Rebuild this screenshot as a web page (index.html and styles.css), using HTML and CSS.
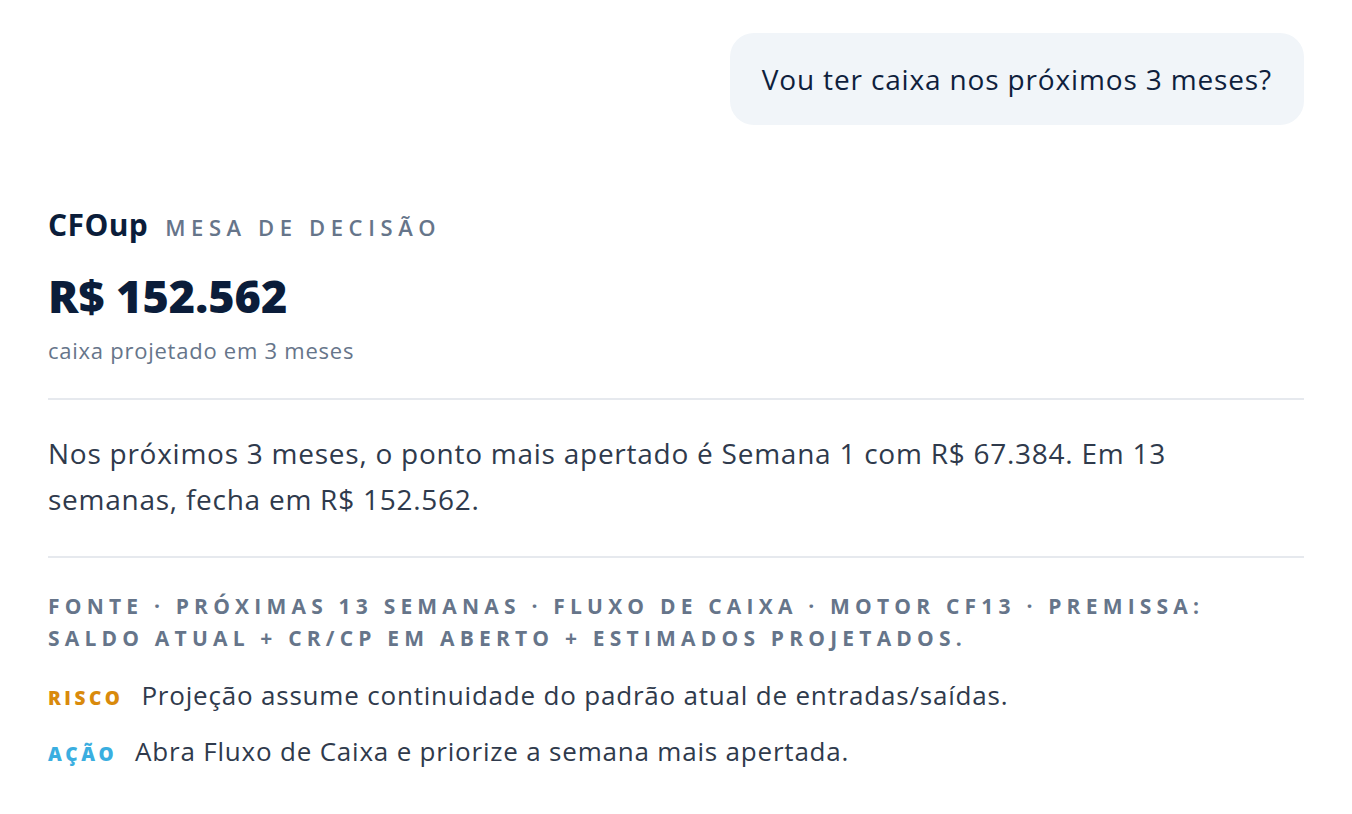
FILE: index.html
```html
<!DOCTYPE html>
<html lang="pt-BR">
<head>
<meta charset="utf-8">
<title>CFOup — Mesa de decisão</title>
<link rel="stylesheet" href="styles.css">
</head>
<body>
<main class="chat">
  <div class="msg-user">
    <div class="bubble">Vou ter caixa nos próximos 3 meses?</div>
  </div>

  <section class="answer">
    <header class="brand">
      <span class="brand-name">CFOup</span>
      <span class="brand-tag">Mesa de decisão</span>
    </header>

    <div class="kpi">
      <div class="kpi-value">R$ 152.562</div>
      <div class="kpi-label">caixa projetado em 3 meses</div>
    </div>

    <hr class="rule rule-top">

    <p class="summary">Nos próximos 3 meses, o ponto mais apertado é Semana 1 com R$ 67.384. Em 13 semanas, fecha em R$ 152.562.</p>

    <hr class="rule">

    <p class="source">Fonte · Próximas 13 semanas · Fluxo de caixa · Motor CF13 · Premissa: saldo atual + CR/CP em aberto + estimados projetados.</p>

    <ul class="notes">
      <li class="note"><span class="tag tag-risk">Risco</span><span>Projeção assume continuidade do padrão atual de entradas/saídas.</span></li>
      <li class="note"><span class="tag tag-action">Ação</span><span>Abra Fluxo de Caixa e priorize a semana mais apertada.</span></li>
    </ul>
  </section>
</main>
</body>
</html>
```

FILE: styles.css
```css
* { box-sizing: border-box; }

html, body {
  margin: 0;
  padding: 0;
  background: #ffffff;
}

body {
  font-family: "Open Sans", "Noto Sans", "Liberation Sans", sans-serif;
  color: #0f1f3d;
}

.chat {
  padding: 33px 48px 40px 48px;
}

/* user question, right aligned */
.msg-user {
  display: flex;
  justify-content: flex-end;
}

.bubble {
  background: #f1f5f9;
  border-radius: 24px;
  padding: 0 32px 0 32px;
  height: 92px;
  display: flex;
  align-items: center;
  font-size: 28px;
  letter-spacing: 0.85px;
  color: #0f1f3d;
}

/* assistant answer */
.answer {
  margin-top: 85px;
}

.brand {
  display: flex;
  align-items: baseline;
  gap: 17px;
  height: 30px;
  line-height: 30px;
}

.brand-name {
  font-size: 30px;
  font-weight: 700;
  letter-spacing: 0.4px;
  color: #0b1d3a;
}

.brand-tag {
  font-size: 22px;
  font-weight: 600;
  text-transform: uppercase;
  letter-spacing: 5.6px;
  color: #66758a;
}

.kpi {
  margin-top: 28px;
}

.kpi-value {
  font-size: 45px;
  font-weight: 800;
  line-height: 56px;
  color: #0b1d3a;
}

.kpi-label {
  margin-top: 11px;
  font-size: 22px;
  line-height: 30px;
  letter-spacing: 0.75px;
  color: #66758a;
}

.rule {
  border: 0;
  border-top: 2px solid #e6e9ee;
  margin: 0;
}

.rule-top {
  margin-top: 33px;
}

.summary {
  max-width: 1230px;
  margin: 30px 0 34px;
  font-size: 28px;
  line-height: 46px;
  letter-spacing: 0.75px;
  color: #2f3a4c;
}

.source {
  margin: 32px 0 0;
  font-size: 21px;
  line-height: 32px;
  font-weight: 700;
  text-transform: uppercase;
  letter-spacing: 5.2px;
  color: #66758a;
}

.notes {
  list-style: none;
  margin: 23px 0 0;
  padding: 0;
  display: flex;
  flex-direction: column;
  gap: 17px;
}

.note {
  display: flex;
  align-items: baseline;
  gap: 18px;
  font-size: 26px;
  line-height: 36px;
  letter-spacing: 0.8px;
  color: #2f3a4c;
}

.tag {
  font-size: 19px;
  font-weight: 800;
  text-transform: uppercase;
  letter-spacing: 3.5px;
}

.tag-risk { color: #d98a0b; }
.tag-action { color: #3aaee0; }
```
